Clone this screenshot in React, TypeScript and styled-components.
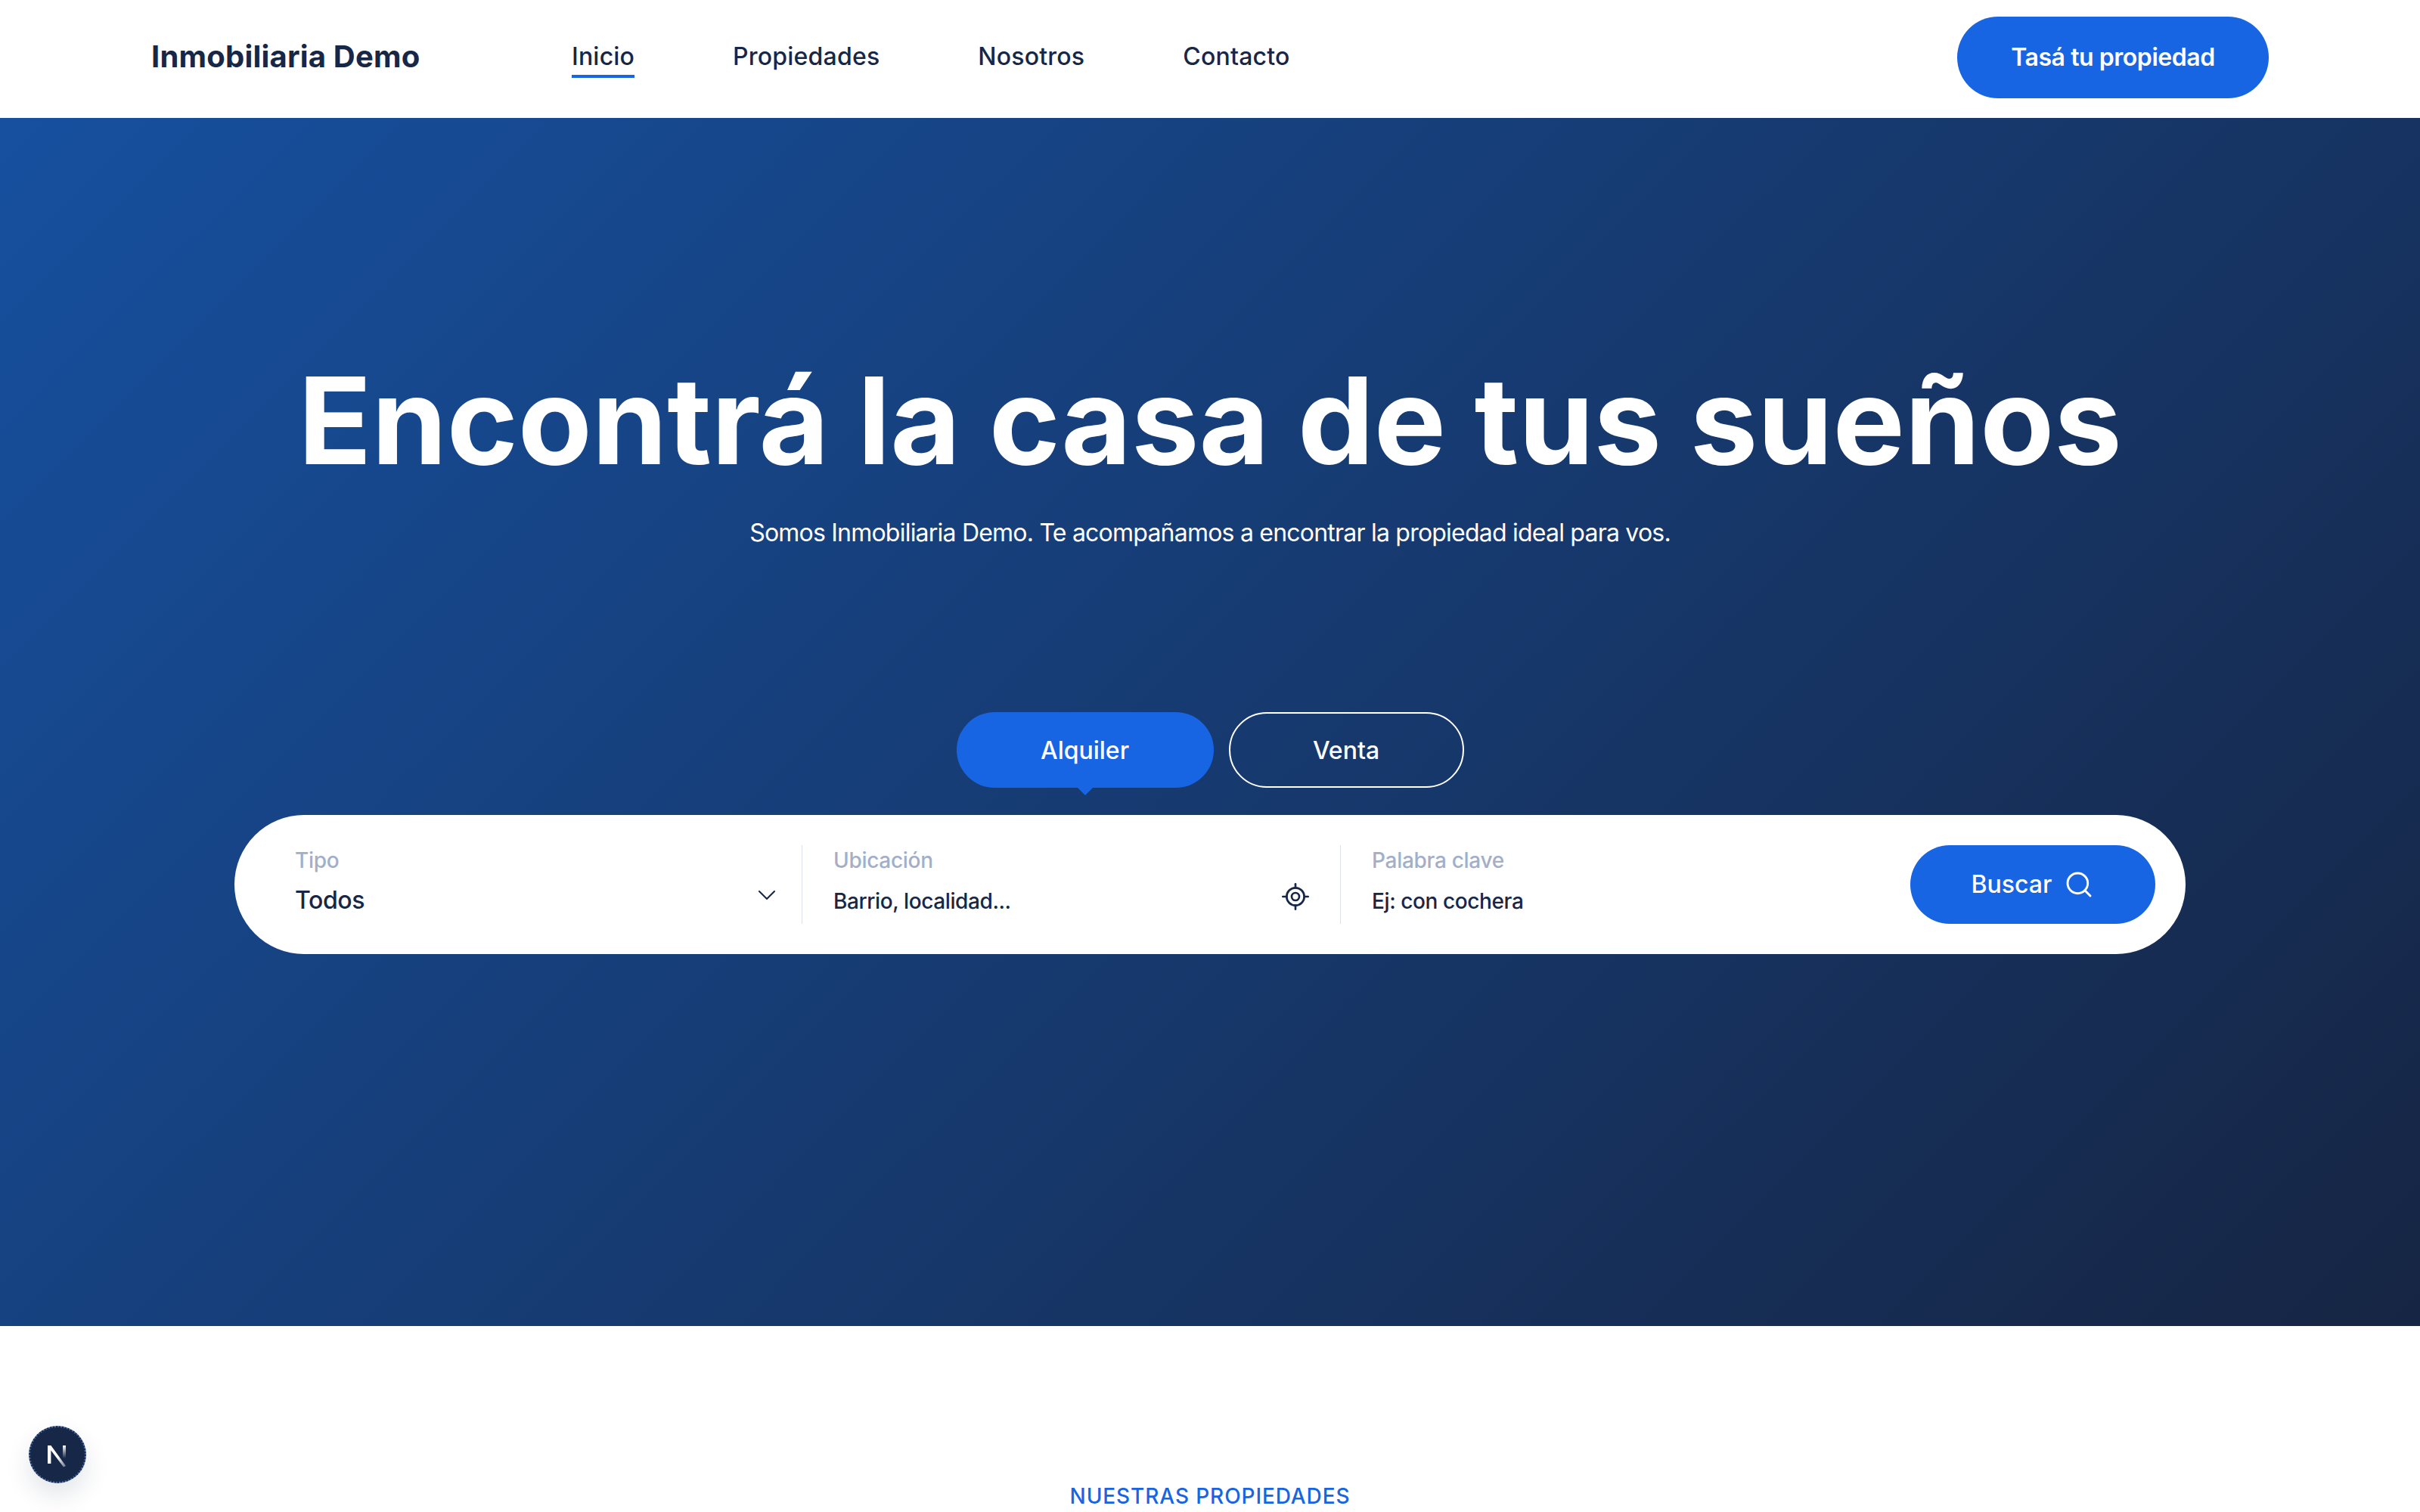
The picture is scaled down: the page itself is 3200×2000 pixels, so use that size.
import React from "react";
import styled, { createGlobalStyle } from "styled-components";
import { ChevronDown, LocateFixed, Search } from "lucide-react";

const Global = createGlobalStyle`
  html, body { margin: 0; padding: 0; background: #fff; }
  body { font-family: Inter, "Noto Sans", sans-serif; color: #172747; height: 2000px; overflow: hidden; }
  * { box-sizing: border-box; }
`;

const Header = styled.header`
  height: 156px;
  padding: 0 200px 4px;
  display: flex;
  align-items: center;
  background: #fff;
`;
const Logo = styled.a`
  font-size: 40px;
  font-weight: 700;
  letter-spacing: 0.2px;
  line-height: 48px;
  margin-top: -3px;
  color: #172747;
  width: 556px;
`;
const Nav = styled.nav`
  display: flex;
  gap: 130px;
  flex: 1;
  margin-top: -2px;
`;
const NavLink = styled.a<{ $active?: boolean }>`
  position: relative;
  font-size: 32px;
  font-weight: 450;
  letter-spacing: 0.2px;
  color: #172747;
  line-height: 44px;
  &::after {
    content: "";
    display: ${(p) => (p.$active ? "block" : "none")};
    position: absolute;
    left: 0;
    right: 0;
    bottom: -6px;
    height: 4px;
    background: #1765e3;
  }
`;
const Cta = styled.button`
  width: 412px;
  height: 108px;
  padding: 0 0 2px;
  border: 0;
  border-radius: 54px;
  background: #1765e3;
  color: #fff;
  font: 600 32px Inter, sans-serif;
  letter-spacing: -0.45px;
`;
const Hero = styled.section`
  height: 1598px;
  padding-top: 312px;
  display: flex;
  flex-direction: column;
  align-items: center;
  background: linear-gradient(135deg, #16509f 0%, #162543 100%);
  color: #fff;
`;
const Title = styled.h1`
  margin: 0;
  font-size: 160px;
  line-height: 176px;
  font-weight: 700;
  letter-spacing: -0.15px;
  white-space: nowrap;
`;
const Subtitle = styled.p`
  margin: 36px 0 0;
  font-size: 32px;
  line-height: 50px;
  font-weight: 400;
  letter-spacing: -0.78px;
`;
const Tabs = styled.div`
  margin-top: 212px;
  display: flex;
  gap: 20px;
`;
const Tab = styled.button<{ $active?: boolean }>`
  position: relative;
  height: 100px;
  width: ${(p) => (p.$active ? "340px" : "311px")};
  border-radius: 50px;
  border: ${(p) => (p.$active ? "0" : "2px solid #fff")};
  background: ${(p) => (p.$active ? "#1765e3" : "transparent")};
  color: #fff;
  font: 500 32px Inter, sans-serif;
  letter-spacing: 0;
  &::after {
    content: "";
    display: ${(p) => (p.$active ? "block" : "none")};
    position: absolute;
    left: 50%;
    top: 100%;
    margin-left: -10px;
    border-left: 10px solid transparent;
    border-right: 10px solid transparent;
    border-top: 10px solid #1765e3;
  }
`;
const SearchBar = styled.form`
  margin-top: 36px;
  width: 2580px;
  height: 184px;
  border-radius: 92px;
  background: #fff;
  padding: 40px;
  display: flex;
  align-items: stretch;
  color: #172747;
`;
const Field = styled.div<{ $w: number; $first?: boolean }>`
  position: relative;
  width: ${(p) => p.$w}px;
  padding-left: ${(p) => (p.$first ? "40px" : "41px")};
  border-left: ${(p) => (p.$first ? "0" : "1px solid #dde2ea")};
  display: flex;
  flex-direction: column;
`;
const Label = styled.span`
  margin-top: 2px;
  font-size: 28px;
  line-height: 36px;
  font-weight: 500;
  letter-spacing: -0.3px;
  color: #a3afc8;
`;
const Value = styled.span<{ $big?: boolean }>`
  margin-top: ${(p) => (p.$big ? "17px" : "18px")};
  font-size: ${(p) => (p.$big ? "32px" : "28px")};
  line-height: 36px;
  font-weight: 500;
  letter-spacing: -0.4px;
  color: #172747;
`;
const FieldIcon = styled.span<{ $r: number; $t: number }>`
  position: absolute;
  right: ${(p) => p.$r}px;
  top: ${(p) => p.$t}px;
  display: flex;
  color: #172747;
`;
const Spacer = styled.div`
  flex: 1;
`;
const SearchButton = styled.button`
  width: 324px;
  height: 104px;
  padding: 0 0 1px;
  border: 0;
  border-radius: 52px;
  background: #1765e3;
  color: #fff;
  font: 500 32px Inter, sans-serif;
  letter-spacing: 0;
  display: flex;
  align-items: center;
  justify-content: center;
  gap: 16px;
`;
const Section = styled.section`
  padding-top: 212px;
  text-align: center;
`;
const Eyebrow = styled.div`
  font-size: 28px;
  line-height: 26px;
  font-weight: 500;
  letter-spacing: 0.9px;
  color: #1765e3;
`;
const DevBadge = styled.div`
  position: fixed;
  left: 38px;
  top: 1886px;
  width: 76px;
  height: 76px;
  border-radius: 50%;
  background: #172747;
  border: 2px dotted #4a6ba6;
  box-shadow: 0 16px 32px rgba(23, 39, 71, 0.12);
  display: flex;
  align-items: center;
  justify-content: center;
`;

export default function App() {
  return (
    <>
      <Global />
      <Header>
        <Logo>Inmobiliaria Demo</Logo>
        <Nav>
          <NavLink $active>Inicio</NavLink>
          <NavLink>Propiedades</NavLink>
          <NavLink>Nosotros</NavLink>
          <NavLink>Contacto</NavLink>
        </Nav>
        <Cta>Tasá tu propiedad</Cta>
      </Header>
      <Hero>
        <Title>Encontrá la casa de tus sueños</Title>
        <Subtitle>Somos Inmobiliaria Demo. Te acompañamos a encontrar la propiedad ideal para vos.</Subtitle>
        <Tabs>
          <Tab $active>Alquiler</Tab>
          <Tab>Venta</Tab>
        </Tabs>
        <SearchBar>
          <Field $w={710} $first>
            <Label>Tipo</Label>
            <Value $big>Todos</Value>
            <FieldIcon $r={26} $t={46}>
              <ChevronDown size={40} strokeWidth={1.25} />
            </FieldIcon>
          </Field>
          <Field $w={712}>
            <Label>Ubicación</Label>
            <Value>Barrio, localidad...</Value>
            <FieldIcon $r={39} $t={48}>
              <LocateFixed size={40} strokeWidth={1.6} />
            </FieldIcon>
          </Field>
          <Field $w={400}>
            <Label>Palabra clave</Label>
            <Value>Ej: con cochera</Value>
          </Field>
          <Spacer />
          <SearchButton>
            Buscar
            <Search size={40} strokeWidth={1.75} />
          </SearchButton>
        </SearchBar>
      </Hero>
      <Section>
        <Eyebrow>NUESTRAS PROPIEDADES</Eyebrow>
      </Section>
      <DevBadge>
        <svg width="36" height="36" viewBox="0 0 36 36" fill="none">
          <defs>
            <linearGradient id="nfade" x1="0" y1="0" x2="1" y2="1">
              <stop offset="0.55" stopColor="#fff" />
              <stop offset="1" stopColor="#fff" stopOpacity="0.35" />
            </linearGradient>
            <linearGradient id="ifade" x1="0" y1="0" x2="0" y2="1">
              <stop offset="0" stopColor="#fff" />
              <stop offset="1" stopColor="#fff" stopOpacity="0" />
            </linearGradient>
          </defs>
          <path d="M5 6h4.4L29 33l-3 1.6L9.4 12.5V30H5z" fill="url(#nfade)" />
          <rect x="25" y="6" width="4" height="17" fill="url(#ifade)" />
        </svg>
      </DevBadge>
    </>
  );
}
